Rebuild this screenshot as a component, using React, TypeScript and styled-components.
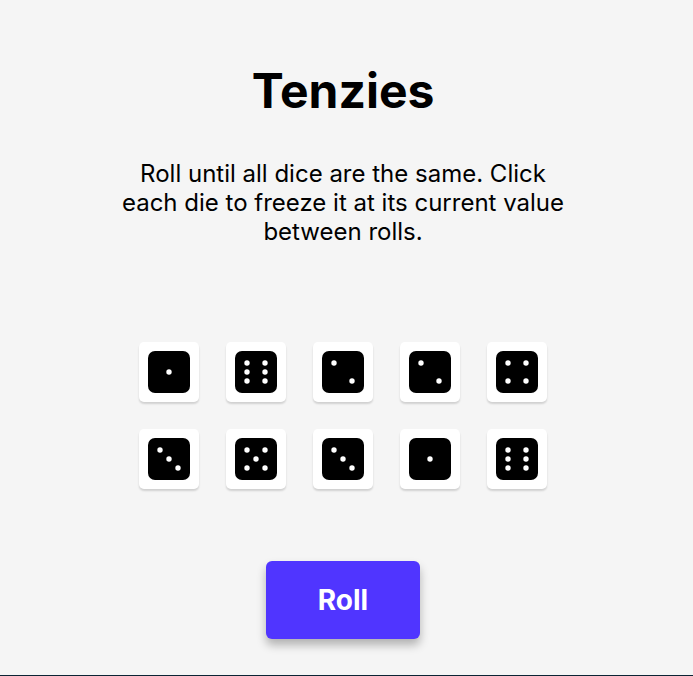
import React from "react";
import styled, { createGlobalStyle } from "styled-components";

const GlobalStyle = createGlobalStyle`
  html, body {
    margin: 0;
    padding: 0;
    background: #0B2434;
  }
  * { box-sizing: border-box; }
`;

const Main = styled.main`
  height: 675px;
  background: #f5f5f5;
  display: flex;
  flex-direction: column;
  align-items: center;
  padding-right: 7px;
  font-family: Inter, "Noto Sans", sans-serif;
  color: #000;
`;

const Title = styled.h1`
  margin: 62px 0 0;
  font-size: 48px;
  line-height: 58px;
  font-weight: 700;
`;

const Instructions = styled.p`
  margin: 39px 0 0;
  max-width: 450px;
  text-align: center;
  font-size: 24px;
  line-height: 29px;
  font-weight: 400;
`;

const DiceGrid = styled.div`
  margin-top: 96px;
  display: grid;
  grid-template-columns: repeat(5, 60px);
  grid-auto-rows: 60px;
  gap: 27px;
`;

const DieButton = styled.button`
  width: 60px;
  height: 60px;
  padding: 0;
  border: none;
  border-radius: 5px;
  background: #fff;
  box-shadow: 0 2px 2px rgba(0, 0, 0, 0.15);
  display: flex;
  align-items: center;
  justify-content: center;
  cursor: pointer;
`;

const RollButton = styled.button`
  margin-top: 72px;
  width: 154px;
  height: 78px;
  border: none;
  border-radius: 6px;
  background: #5035ff;
  color: #fff;
  font-family: Inter, "Noto Sans", sans-serif;
  font-size: 28px;
  font-weight: 700;
  box-shadow: 0 6px 10px rgba(0, 0, 0, 0.28);
  cursor: pointer;
`;

const PIPS: Record<number, [number, number][]> = {
  1: [[0, 0]],
  2: [[-1, -1], [1, 1]],
  3: [[-1, -1], [0, 0], [1, 1]],
  4: [[-1, -1], [1, -1], [-1, 1], [1, 1]],
  5: [[-1, -1], [1, -1], [0, 0], [-1, 1], [1, 1]],
  6: [[-1, -1], [1, -1], [-1, 0], [1, 0], [-1, 1], [1, 1]],
};

function DieFace({ value }: { value: number }) {
  return (
    <svg width="42" height="42" viewBox="0 0 42 42">
      <rect x="0" y="0" width="42" height="42" rx="7" fill="#000" />
      {PIPS[value].map(([dx, dy], i) => (
        <circle key={i} cx={21 + dx * 9} cy={21 + dy * 9} r="2.7" fill="#fff" />
      ))}
    </svg>
  );
}

const dice = [1, 6, 2, 2, 4, 3, 5, 3, 1, 6];

export default function App() {
  return (
    <>
      <GlobalStyle />
      <Main>
        <Title>Tenzies</Title>
        <Instructions>
          Roll until all dice are the same. Click each die to freeze it at its current value between rolls.
        </Instructions>
        <DiceGrid>
          {dice.map((v, i) => (
            <DieButton key={i} aria-label={`Die with value ${v}`}>
              <DieFace value={v} />
            </DieButton>
          ))}
        </DiceGrid>
        <RollButton>Roll</RollButton>
      </Main>
    </>
  );
}
